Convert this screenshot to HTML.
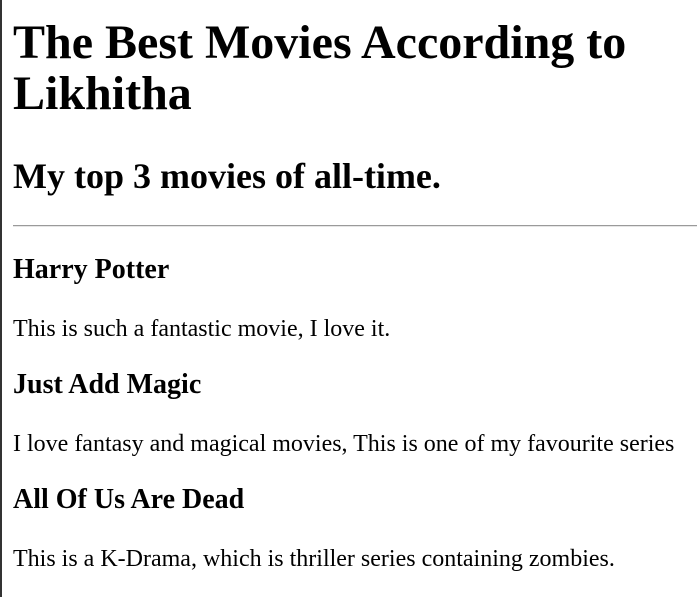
<!DOCTYPE html>
<html><head><style>
html,body{margin:0;padding:0;width:697px;height:597px;overflow:hidden;background:#fff;}
body{position:relative;font-family:"Liberation Serif",serif;color:#000;}
.l{position:absolute;left:0;top:0;width:1.5px;height:597px;background:#333;}
.t{position:absolute;left:13px;white-space:nowrap;line-height:normal;margin:0;}
.h1{font-size:48px;font-weight:bold;}
.h2{font-size:36px;font-weight:bold;}
.h3{font-size:28px;font-weight:bold;}
.p{font-size:24px;}
.hr{position:absolute;left:13px;right:0;top:225px;height:0;border-top:1px solid #9a9a9a;border-bottom:1px solid #e6e6e6;}
</style></head><body>
<div class="l"></div>
<div class="t h1" style="top:15px">The Best Movies According to</div>
<div class="t h1" style="top:66px">Likhitha</div>
<div class="t h2" style="top:155px">My top 3 movies of all-time.</div>
<div class="hr"></div>
<div class="t h3" style="top:254px">Harry Potter</div>
<div class="t p" style="top:316px">This is such a fantastic movie, I love it.</div>
<div class="t h3" style="top:369px">Just Add Magic</div>
<div class="t p" style="top:431px">I love fantasy and magical movies, This is one of my favourite series</div>
<div class="t h3" style="top:484px">All Of Us Are Dead</div>
<div class="t p" style="top:546px">This is a K-Drama, which is thriller series containing zombies.</div>
</body></html>
